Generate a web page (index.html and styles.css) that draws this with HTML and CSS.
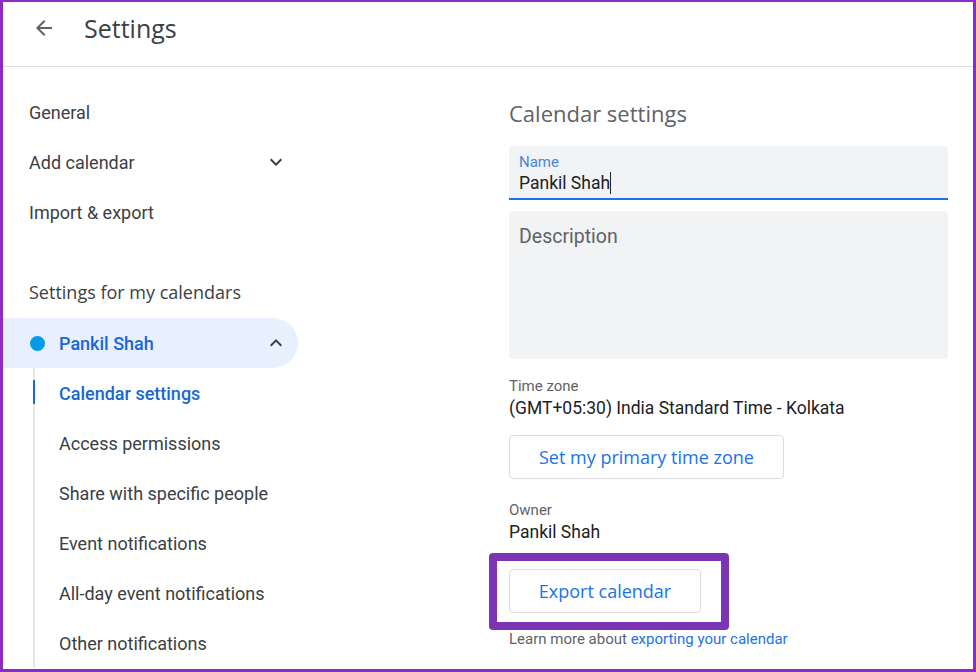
FILE: index.html
```html
<!DOCTYPE html>
<html lang="en">
<head>
<meta charset="UTF-8">
<meta name="viewport" content="width=device-width, initial-scale=1.0">
<title>Settings</title>
<link rel="stylesheet" href="styles.css">
</head>
<body>
<div class="frame">
  <div class="header">
    <svg class="back" width="24" height="24" viewBox="0 0 24 24"><path d="M20 11H7.83l5.59-5.59L12 4l-8 8 8 8 1.41-1.41L7.83 13H20v-2z" fill="#5f6368"/></svg>
    <div class="title">Settings</div>
  </div>
  <div class="main">
    <div class="nav">
      <div class="nav-item">General</div>
      <div class="nav-item">Add calendar
        <svg class="chev" width="24" height="24" viewBox="0 0 24 24"><path d="M7.41 8.59L12 13.17l4.59-4.58L18 10l-6 6-6-6 1.41-1.41z" fill="#3c4043"/></svg>
      </div>
      <div class="nav-item">Import &amp; export</div>
      <div class="nav-heading">Settings for my calendars</div>
      <div class="cal-row">
        <span class="dot"></span>
        <span class="cal-name">Pankil Shah</span>
        <svg class="chev" width="24" height="24" viewBox="0 0 24 24"><path d="M7.41 15.41L12 10.83l4.59 4.58L18 14l-6-6-6 6z" fill="#3c4043"/></svg>
      </div>
      <div class="sub-list">
        <div class="sub-item active">Calendar settings</div>
        <div class="sub-item">Access permissions</div>
        <div class="sub-item">Share with specific people</div>
        <div class="sub-item">Event notifications</div>
        <div class="sub-item">All-day event notifications</div>
        <div class="sub-item">Other notifications</div>
      </div>
    </div>
    <div class="content">
      <div class="section-title">Calendar settings</div>
      <div class="field">
        <div class="field-label">Name</div>
        <div class="field-value">Pankil Shah<span class="caret"></span></div>
      </div>
      <div class="textarea">Description</div>
      <div class="label tz-label">Time zone</div>
      <div class="value">(GMT+05:30) India Standard Time - Kolkata</div>
      <div class="btn tz-btn">Set my primary time zone</div>
      <div class="label owner-label">Owner</div>
      <div class="value">Pankil Shah</div>
      <div class="export-wrap">
        <div class="btn">Export calendar</div>
      </div>
      <div class="learn">Learn more about <span class="link">exporting your calendar</span></div>
    </div>
  </div>
</div>
</body>
</html>
```

FILE: styles.css
```css
body {
  margin: 0;
  font-family: Roboto, Arial, sans-serif;
  background: #fff;
}
.frame {
  box-sizing: border-box;
  width: 976px;
  height: 672px;
  border: 3px solid #8a2cc8;
  border-top-width: 2px;
  overflow: hidden;
}
.header {
  height: 64px;
  border-bottom: 1px solid #dadce0;
  display: flex;
  align-items: center;
  padding-left: 29px;
}
.back {
  margin-top: -12px;
}
.title {
  font-family: "Open Sans", sans-serif;
  font-size: 25px;
  color: #3c4043;
  margin-left: 28px;
  margin-top: -13px;
}
.main {
  display: flex;
}
.nav {
  width: 295px;
  padding-top: 20px;
  flex-shrink: 0;
}
.nav-item {
  height: 50px;
  display: flex;
  align-items: center;
  padding-left: 26px;
  padding-right: 10px;
  font-size: 18px;
  color: #3c4043;
}
.chev {
  margin-left: auto;
}
.nav-heading {
  height: 50px;
  margin-top: 30px;
  display: flex;
  align-items: center;
  padding-left: 26px;
  font-family: "Open Sans", sans-serif;
  font-size: 18px;
  color: #3c4043;
}
.cal-row {
  height: 50px;
  margin-top: 1px;
  background: #e8f0fe;
  border-radius: 0 25px 25px 0;
  display: flex;
  align-items: center;
  padding-left: 27px;
  padding-right: 10px;
}
.dot {
  width: 15px;
  height: 15px;
  border-radius: 50%;
  background: #039be5;
}
.cal-name {
  margin-left: 14px;
  font-size: 18px;
  font-weight: 500;
  color: #1967d2;
}
.sub-list {
  margin-left: 30px;
  border-left: 2px solid #e4e6e9;
}
.sub-item {
  height: 50px;
  display: flex;
  align-items: center;
  padding-left: 24px;
  font-size: 18px;
  color: #3c4043;
}
.sub-item.active {
  color: #1967d2;
  font-weight: 500;
  position: relative;
}
.sub-item.active::before {
  content: "";
  position: absolute;
  left: -2px;
  top: 12px;
  width: 2px;
  height: 24px;
  background: #1967d2;
}
.content {
  flex: 1;
  padding-left: 211px;
  padding-right: 25px;
  padding-top: 32px;
}
.section-title {
  font-family: "Open Sans", sans-serif;
  font-size: 22px;
  line-height: 28px;
  color: #5f6368;
  margin-bottom: 19px;
}
.field {
  background: #f1f3f4;
  border-radius: 4px 4px 0 0;
  border-bottom: 2px solid #1a73e8;
  padding: 8px 10px 2px;
}
.field-label {
  font-size: 15px;
  line-height: 16px;
  color: #4a86d8;
}
.field-value {
  font-size: 17.5px;
  line-height: 26px;
  color: #202124;
}
.caret {
  display: inline-block;
  width: 1px;
  height: 22px;
  background: #202124;
  vertical-align: -5px;
}
.textarea {
  margin-top: 11px;
  height: 134px;
  background: #f1f3f4;
  border-radius: 4px;
  padding: 14px 10px 0;
  font-size: 19.5px;
  line-height: 24px;
  color: #5f6368;
  box-sizing: content-box;
}
.label {
  font-size: 15px;
  line-height: 20px;
  color: #5f6368;
}
.tz-label {
  margin-top: 17px;
}
.owner-label {
  margin-top: 21px;
}
.value {
  font-size: 17.5px;
  line-height: 24px;
  color: #202124;
}
.btn {
  display: inline-flex;
  align-items: center;
  justify-content: center;
  box-sizing: border-box;
  height: 44px;
  padding: 0 29px;
  border: 1px solid #dadce0;
  border-radius: 4px;
  font-family: "Open Sans", sans-serif;
  font-size: 18px;
  font-weight: 500;
  color: #1a73e8;
  background: #fff;
  white-space: nowrap;
}
.tz-btn {
  margin-top: 15px;
}
.export-wrap {
  position: relative;
  margin-top: 25px;
  width: 192px;
}
.export-wrap .btn {
  width: 192px;
  padding: 0;
}
.export-wrap::after {
  content: "";
  position: absolute;
  left: -20px;
  top: -16px;
  width: 240px;
  height: 77px;
  box-sizing: border-box;
  border: 8px solid #7b34b4;
  border-radius: 4px;
}
.learn {
  margin-top: 16px;
  font-size: 15px;
  line-height: 20px;
  color: #5f6368;
}
.link {
  color: #1a73e8;
}
```
